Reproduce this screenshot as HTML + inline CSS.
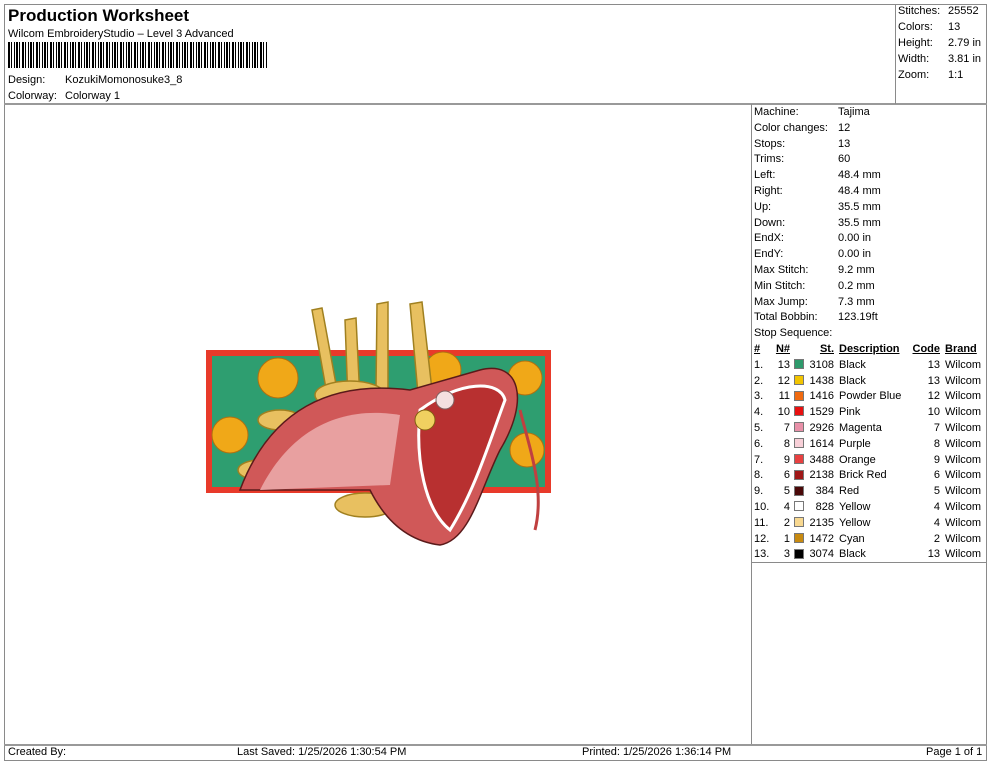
<!DOCTYPE html>
<html><head><meta charset="utf-8"><style>
*{margin:0;padding:0;box-sizing:border-box}
body{width:990px;height:762px;background:#fff;position:relative;font-family:"Liberation Sans",Arial,sans-serif;font-size:11px;color:#000;overflow:hidden}
.a{position:absolute;white-space:nowrap;line-height:13px}
.l{position:absolute;background:#8a8a8a}
.r{text-align:right}
.sw{position:absolute;width:10px;height:10px;border:1px solid #777}
u{text-decoration:underline;font-weight:bold}
</style></head><body>
<div class="l" style="left:4px;top:4px;width:983px;height:1px"></div>
<div class="l" style="left:4px;top:4px;width:1px;height:757px"></div>
<div class="l" style="left:986px;top:4px;width:1px;height:757px"></div>
<div class="l" style="left:4px;top:103px;width:983px;height:2px;background:#999"></div>
<div class="l" style="left:895px;top:4px;width:1px;height:100px"></div>
<div class="l" style="left:751px;top:104px;width:1px;height:640px"></div>
<div class="l" style="left:751px;top:562px;width:236px;height:1px"></div>
<div class="l" style="left:4px;top:744px;width:983px;height:2px;background:#999"></div>
<div class="l" style="left:4px;top:760px;width:983px;height:1px"></div>

<div class="a" style="left:8px;top:6px;font-size:17px;font-weight:bold;line-height:20px">Production Worksheet</div>
<div class="a" style="left:8px;top:28px">Wilcom EmbroideryStudio – Level 3 Advanced</div>
<div class="a" style="left:8px;top:42px;width:260px;height:26px;background:repeating-linear-gradient(90deg,#000 0 2px,#fff 2px 3px,#000 3px 4px,#fff 4px 6px,#000 6px 7px,#fff 7px 8px,#000 8px 10px,#fff 10px 11px,#000 11px 12px,#fff 12px 14px)"></div>
<div class="a" style="left:8px;top:74px">Design:</div><div class="a" style="left:65px;top:74px">KozukiMomonosuke3_8</div>
<div class="a" style="left:8px;top:90px">Colorway:</div><div class="a" style="left:65px;top:90px">Colorway 1</div>

<div class="a" style="left:898px;top:5px">Stitches:</div><div class="a" style="left:948px;top:5px">25552</div>
<div class="a" style="left:898px;top:21px">Colors:</div><div class="a" style="left:948px;top:21px">13</div>
<div class="a" style="left:898px;top:37px">Height:</div><div class="a" style="left:948px;top:37px">2.79 in</div>
<div class="a" style="left:898px;top:53px">Width:</div><div class="a" style="left:948px;top:53px">3.81 in</div>
<div class="a" style="left:898px;top:69px">Zoom:</div><div class="a" style="left:948px;top:69px">1:1</div>

<div class="a" style="left:754px;top:105px;line-height:15.8px">Machine:<br>Color changes:<br>Stops:<br>Trims:<br>Left:<br>Right:<br>Up:<br>Down:<br>EndX:<br>EndY:<br>Max Stitch:<br>Min Stitch:<br>Max Jump:<br>Total Bobbin:<br>Stop Sequence:</div>
<div class="a" style="left:838px;top:105px;line-height:15.8px">Tajima<br>12<br>13<br>60<br>48.4 mm<br>48.4 mm<br>35.5 mm<br>35.5 mm<br>0.00 in<br>0.00 in<br>9.2 mm<br>0.2 mm<br>7.3 mm<br>123.19ft</div>

<div class="a" style="left:754px;top:342px;line-height:15.8px"><u>#</u><br>1.<br>2.<br>3.<br>4.<br>5.<br>6.<br>7.<br>8.<br>9.<br>10.<br>11.<br>12.<br>13.</div>
<div class="a r" style="left:770px;width:20px;top:342px;line-height:15.8px"><u>N#</u><br>13<br>12<br>11<br>10<br>7<br>8<br>9<br>6<br>5<br>4<br>2<br>1<br>3</div>
<div class="a r" style="left:800px;width:34px;top:342px;line-height:15.8px"><u>St.</u><br>3108<br>1438<br>1416<br>1529<br>2926<br>1614<br>3488<br>2138<br>384<br>828<br>2135<br>1472<br>3074</div>
<div class="a" style="left:839px;top:342px;line-height:15.8px"><u>Description</u><br>Black<br>Black<br>Powder Blue<br>Pink<br>Magenta<br>Purple<br>Orange<br>Brick Red<br>Red<br>Yellow<br>Yellow<br>Cyan<br>Black</div>
<div class="a r" style="left:900px;width:40px;top:342px;line-height:15.8px"><u>Code</u><br>13<br>13<br>12<br>10<br>7<br>8<br>9<br>6<br>5<br>4<br>4<br>2<br>13</div>
<div class="a" style="left:945px;top:342px;line-height:15.8px"><u>Brand</u><br>Wilcom<br>Wilcom<br>Wilcom<br>Wilcom<br>Wilcom<br>Wilcom<br>Wilcom<br>Wilcom<br>Wilcom<br>Wilcom<br>Wilcom<br>Wilcom<br>Wilcom</div>
<div class="sw" style="left:794px;top:359px;background:#2e9a6c"></div>
<div class="sw" style="left:794px;top:375px;background:#f2c400"></div>
<div class="sw" style="left:794px;top:391px;background:#f06a10"></div>
<div class="sw" style="left:794px;top:406px;background:#e81010"></div>
<div class="sw" style="left:794px;top:422px;background:#e890a8"></div>
<div class="sw" style="left:794px;top:438px;background:#f8d0d8"></div>
<div class="sw" style="left:794px;top:454px;background:#e84040"></div>
<div class="sw" style="left:794px;top:470px;background:#a01818"></div>
<div class="sw" style="left:794px;top:486px;background:#4a0808"></div>
<div class="sw" style="left:794px;top:501px;background:#fff"></div>
<div class="sw" style="left:794px;top:517px;background:#f8d890"></div>
<div class="sw" style="left:794px;top:533px;background:#c88a10"></div>
<div class="sw" style="left:794px;top:549px;background:#000"></div>

<svg style="position:absolute;left:200px;top:290px" width="360" height="270" viewBox="0 0 360 270">
<rect x="6" y="60" width="345" height="143" fill="#e83a2a"/>
<rect x="12" y="66" width="333" height="131" fill="#2e9e70"/>
<g fill="#f0a818" stroke="#b07010" stroke-width="1">
<circle cx="78" cy="88" r="20"/><circle cx="243" cy="80" r="18"/><circle cx="325" cy="88" r="17"/><circle cx="30" cy="145" r="18"/><circle cx="327" cy="160" r="17"/>
</g>
<g fill="#e8c060" stroke="#a08020" stroke-width="1.5">
<path d="M112 20 L122 18 L138 105 L128 110 Z"/><path d="M145 30 L156 28 L160 110 L148 112 Z"/>
<path d="M177 14 L188 12 L188 100 L176 100 Z"/><path d="M210 14 L222 12 L232 100 L218 104 Z"/>
<ellipse cx="150" cy="105" rx="35" ry="14"/><ellipse cx="165" cy="215" rx="30" ry="12"/>
<ellipse cx="60" cy="180" rx="22" ry="10"/><ellipse cx="80" cy="130" rx="22" ry="10"/>
</g>
<path d="M40 200 C70 120 130 90 210 100 L280 80 C320 70 330 110 300 160 C280 200 270 250 240 255 C200 250 180 220 170 200 Z" fill="#d05858" stroke="#5a1a1a" stroke-width="1.5"/>
<path d="M60 200 C90 140 140 115 200 125 L190 195 Z" fill="#e8a0a0"/>
<path d="M220 120 C260 90 300 90 305 110 C290 150 275 200 250 240 C225 220 215 170 220 120 Z" fill="#b83030" stroke="#fff" stroke-width="3"/>
<circle cx="225" cy="130" r="10" fill="#f0d060" stroke="#806010"/>
<circle cx="245" cy="110" r="9" fill="#f4e0e0" stroke="#806060"/>
<path d="M320 120 C330 160 345 200 335 240" stroke="#c04040" stroke-width="3" fill="none"/>
</svg>

<div class="a" style="left:8px;top:746px">Created By:</div>
<div class="a" style="left:237px;top:746px">Last Saved: 1/25/2026 1:30:54 PM</div>
<div class="a" style="left:582px;top:746px">Printed: 1/25/2026 1:36:14 PM</div>
<div class="a" style="left:926px;top:746px">Page 1 of 1</div>
</body></html>
